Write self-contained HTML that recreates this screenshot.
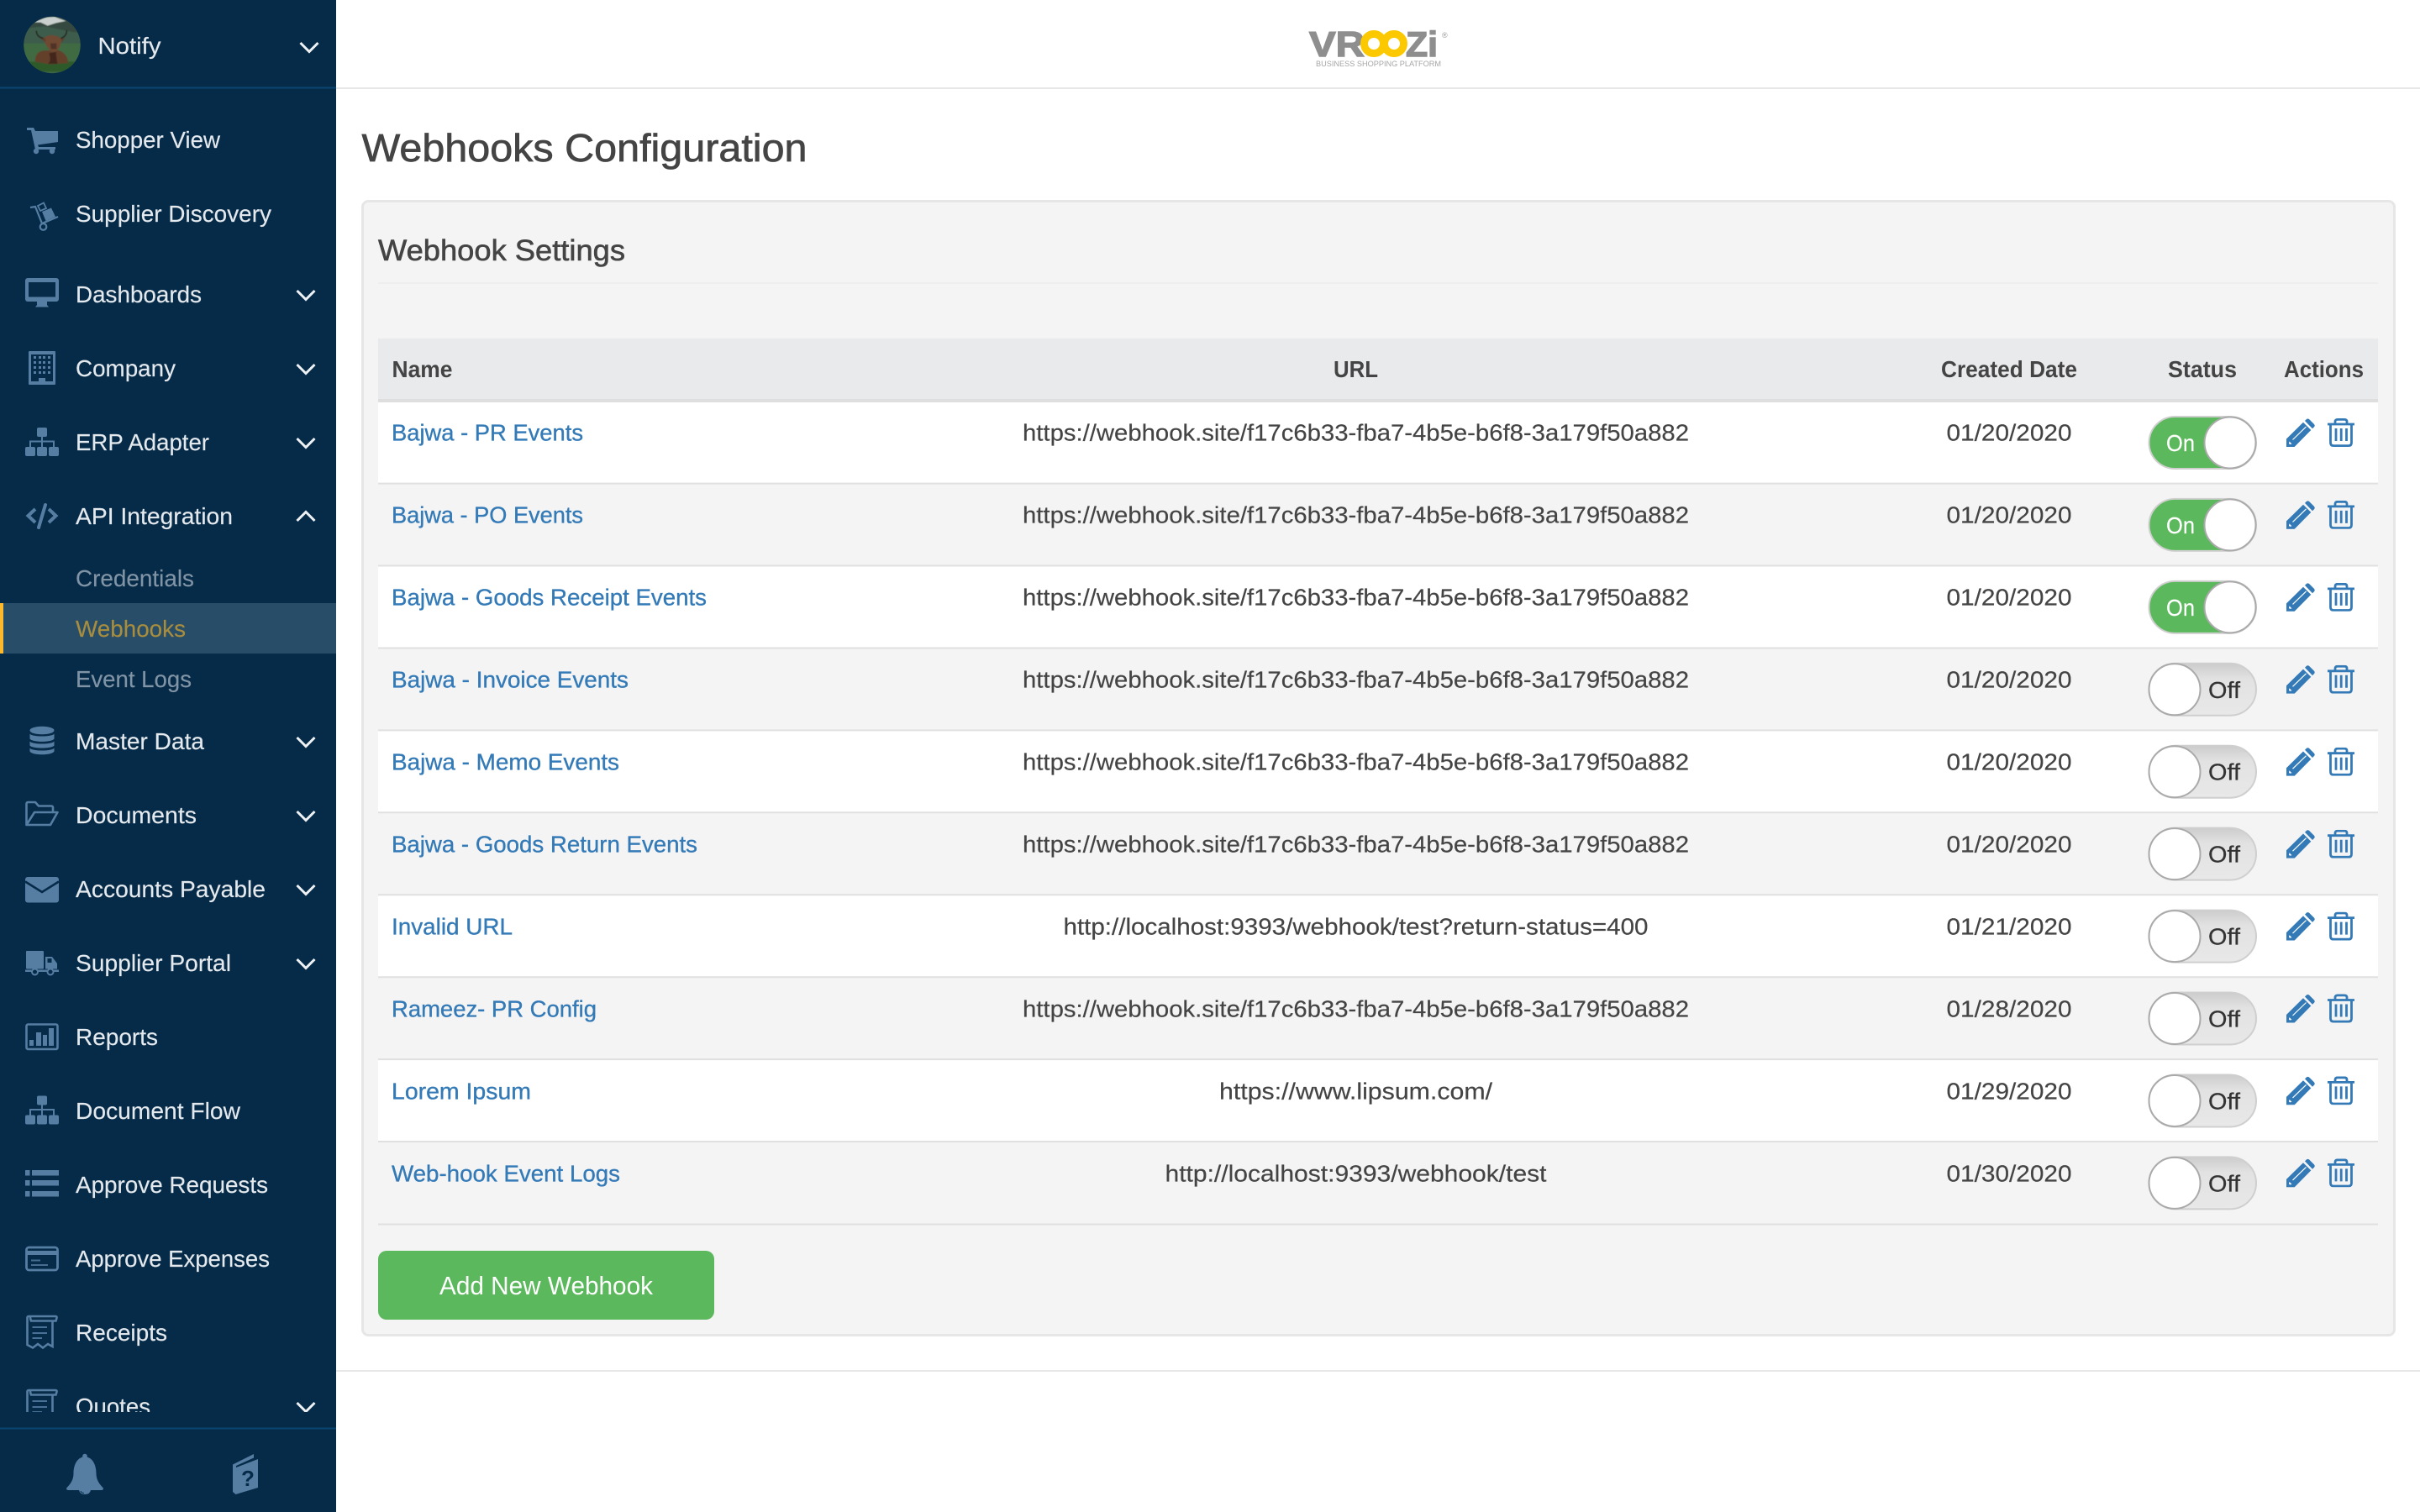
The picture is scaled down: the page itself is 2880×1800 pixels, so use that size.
<!DOCTYPE html>
<html lang="en">
<head>
<meta charset="utf-8">
<title>Webhooks Configuration</title>
<style>
html,body{margin:0;padding:0;background:#fff;width:2880px;height:1800px;overflow:hidden}
svg{display:block;font-family:"Liberation Sans",Arial,sans-serif}
.s{font-size:28px;fill:#e4e9ee;stroke:#e4e9ee;stroke-width:.15px}
.c{font-size:28px;fill:#8194a6;stroke:#8194a6;stroke-width:.15px}
.h{font-size:28px;fill:#444;font-weight:bold}
.n{font-size:28px;fill:#337ab7;stroke:#337ab7;stroke-width:.35px}
.t{font-size:28px;fill:#444;stroke:#444;stroke-width:.2px}
.on{font-size:28px;fill:#fff;stroke:#fff;stroke-width:.2px}
.off{font-size:28px;fill:#333;stroke:#333;stroke-width:.25px}
.i{fill:#567ea3}
.o{fill:none;stroke:#567ea3;stroke-width:2.6}
.ch{fill:none;stroke:#eef2f5;stroke-width:3}
</style>
</head>
<body>
<svg width="2880" height="1800" viewBox="0 0 2880 1800" xmlns="http://www.w3.org/2000/svg">
<defs>
<linearGradient id="offg" x1="0" y1="0" x2="0" y2="1">
<stop offset="0" stop-color="#cccccc"/><stop offset=".3" stop-color="#e2e2e2"/><stop offset="1" stop-color="#e8e8e8"/>
</linearGradient>
<clipPath id="av"><circle cx="62" cy="53.5" r="33.7"/></clipPath>
<clipPath id="menu"><rect x="0" y="106" width="400" height="1575"/></clipPath>
<filter id="bl"><feGaussianBlur stdDeviation="1.8"/></filter>
<symbol id="chd" viewBox="0 0 24 15" width="24" height="15"><path d="M1.5 2L12 12.5 22.5 2" fill="none" stroke="#eef2f5" stroke-width="3"/></symbol>
<symbol id="pencil" viewBox="0 0 34 34" width="34" height="34">
<path fill="#337ab7" d="M0 34V24.5L20 4.8 29.3 14 9.6 34Z"/>
<path fill="#337ab7" d="M22 3L24 1Q25.300 0 27 1L33 7Q34.400 8.700 33 10.300L31 12.300Z"/>
<path fill="none" stroke="#fff" stroke-width="1.2" d="M7.500 25.500L23.500 10"/>
<path fill="#fff" d="M3.500 27.500L6.500 30.500 4 31 3 30Z"/>
</symbol>
<symbol id="trash" viewBox="0 0 32 34" width="32" height="34">
<g fill="none" stroke="#337ab7" stroke-width="2.8">
<path d="M0 7H32"/>
<path d="M9 7V4Q9 1.400 12 1.400H20Q23 1.400 23 4V7"/>
<path d="M3.500 7V29Q3.500 32.600 7 32.600H25Q28.500 32.600 28.500 29V7"/>
<path d="M10 12V27M16.200 12V27M22.500 12V27"/>
</g>
</symbol>
<symbol id="sitemap" viewBox="0 0 40 34" width="40" height="34">
<rect x="14" y="0" width="12" height="11" rx="2" fill="#567ea3"/>
<rect x="0" y="23" width="12" height="11" rx="2" fill="#567ea3"/>
<rect x="14" y="23" width="12" height="11" rx="2" fill="#567ea3"/>
<rect x="28" y="23" width="12" height="11" rx="2" fill="#567ea3"/>
<path d="M20 11V23M6 23V16.500H34V23" fill="none" stroke="#567ea3" stroke-width="2"/>
</symbol>
<symbol id="acts" viewBox="0 0 81 34" width="81" height="34">
<use href="#pencil" x="0" y="0"/><use href="#trash" x="49" y="0"/>
</symbol>
</defs>

<!-- main background -->
<rect x="0" y="0" width="2880" height="1800" fill="#fff"/>
<rect x="400" y="104" width="2480" height="2" fill="#e7e7e7"/>
<rect x="400" y="1631" width="2480" height="2" fill="#e7e7e7"/>

<!-- logo -->
<text x="1558" y="67" font-size="42" font-weight="bold" fill="#8e8e8e" stroke="#8e8e8e" stroke-width="1.4" textLength="66" lengthAdjust="spacingAndGlyphs">VR</text>
<text x="1673" y="67" font-size="42" font-weight="bold" fill="#8e8e8e" stroke="#8e8e8e" stroke-width="1.4" textLength="38" lengthAdjust="spacingAndGlyphs">Zi</text>
<g fill="none" stroke="#fcc900" stroke-width="9"><circle cx="1635" cy="52" r="11.500"/><circle cx="1659" cy="52" r="11.500"/></g>
<text x="1716" y="45" font-size="9" fill="#999">®</text>
<text x="1566" y="79" font-size="9.500" fill="#a6a6a6" textLength="149" lengthAdjust="spacingAndGlyphs">BUSINESS SHOPPING PLATFORM</text>

<!-- title -->
<text x="430.500" y="192" font-size="46" fill="#444" stroke="#444" stroke-width=".7" textLength="530" lengthAdjust="spacingAndGlyphs">Webhooks Configuration</text>

<!-- panel -->
<rect x="431.500" y="239.500" width="2418" height="1350" rx="7" fill="#f4f4f4" stroke="#e6e6e6" stroke-width="3"/>
<text x="450" y="310" font-size="35" fill="#444" stroke="#444" stroke-width=".6" textLength="294" lengthAdjust="spacingAndGlyphs">Webhook Settings</text>
<rect x="450" y="336" width="2380" height="2" fill="#eeeeee"/>

<!-- table header -->
<rect x="450" y="403" width="2380" height="72" fill="#e9eaec"/>
<rect x="450" y="475" width="2380" height="4" fill="#dedede"/>
<text class="h" x="466.500" y="449" textLength="72" lengthAdjust="spacingAndGlyphs">Name</text>
<text class="h" x="1587" y="449" textLength="53" lengthAdjust="spacingAndGlyphs">URL</text>
<text class="h" x="2310" y="449" textLength="162" lengthAdjust="spacingAndGlyphs">Created Date</text>
<text class="h" x="2580" y="449" textLength="82" lengthAdjust="spacingAndGlyphs">Status</text>
<text class="h" x="2718" y="449" textLength="95" lengthAdjust="spacingAndGlyphs">Actions</text>

<!-- row backgrounds -->
<g fill="#fff">
<rect x="450" y="479" width="2380" height="96.600"/>
<rect x="450" y="673.500" width="2380" height="98"/>
<rect x="450" y="869.400" width="2380" height="98"/>
<rect x="450" y="1065.300" width="2380" height="98"/>
<rect x="450" y="1261.100" width="2380" height="98"/>
</g>
<g fill="none" stroke="#e0e0e0" stroke-width="2">
<path d="M450 575.600H2830M450 673.500H2830M450 771.500H2830M450 869.400H2830M450 967.300H2830M450 1065.300H2830M450 1163.200H2830M450 1261.100H2830M450 1359H2830M450 1457.500H2830"/>
</g>

<!-- names -->
<text class="n" x="466" y="524.500" textLength="228" lengthAdjust="spacingAndGlyphs">Bajwa - PR Events</text>
<text class="n" x="466" y="622.500" textLength="228" lengthAdjust="spacingAndGlyphs">Bajwa - PO Events</text>
<text class="n" x="466" y="720.500" textLength="375" lengthAdjust="spacingAndGlyphs">Bajwa - Goods Receipt Events</text>
<text class="n" x="466" y="818.500" textLength="282" lengthAdjust="spacingAndGlyphs">Bajwa - Invoice Events</text>
<text class="n" x="466" y="916.500" textLength="271" lengthAdjust="spacingAndGlyphs">Bajwa - Memo Events</text>
<text class="n" x="466" y="1014.500" textLength="364" lengthAdjust="spacingAndGlyphs">Bajwa - Goods Return Events</text>
<text class="n" x="466" y="1112.500" textLength="144" lengthAdjust="spacingAndGlyphs">Invalid URL</text>
<text class="n" x="466" y="1210.500" textLength="244" lengthAdjust="spacingAndGlyphs">Rameez- PR Config</text>
<text class="n" x="466" y="1308.500" textLength="166" lengthAdjust="spacingAndGlyphs">Lorem Ipsum</text>
<text class="n" x="466" y="1406.500" textLength="272" lengthAdjust="spacingAndGlyphs">Web-hook Event Logs</text>

<!-- urls -->
<text class="t" x="1217" y="524.500" textLength="793" lengthAdjust="spacingAndGlyphs">https://webhook.site/f17c6b33-fba7-4b5e-b6f8-3a179f50a882</text>
<text class="t" x="1217" y="622.500" textLength="793" lengthAdjust="spacingAndGlyphs">https://webhook.site/f17c6b33-fba7-4b5e-b6f8-3a179f50a882</text>
<text class="t" x="1217" y="720.500" textLength="793" lengthAdjust="spacingAndGlyphs">https://webhook.site/f17c6b33-fba7-4b5e-b6f8-3a179f50a882</text>
<text class="t" x="1217" y="818.500" textLength="793" lengthAdjust="spacingAndGlyphs">https://webhook.site/f17c6b33-fba7-4b5e-b6f8-3a179f50a882</text>
<text class="t" x="1217" y="916.500" textLength="793" lengthAdjust="spacingAndGlyphs">https://webhook.site/f17c6b33-fba7-4b5e-b6f8-3a179f50a882</text>
<text class="t" x="1217" y="1014.500" textLength="793" lengthAdjust="spacingAndGlyphs">https://webhook.site/f17c6b33-fba7-4b5e-b6f8-3a179f50a882</text>
<text class="t" x="1265.500" y="1112.500" textLength="696" lengthAdjust="spacingAndGlyphs">http://localhost:9393/webhook/test?return-status=400</text>
<text class="t" x="1217" y="1210.500" textLength="793" lengthAdjust="spacingAndGlyphs">https://webhook.site/f17c6b33-fba7-4b5e-b6f8-3a179f50a882</text>
<text class="t" x="1451" y="1308.500" textLength="325" lengthAdjust="spacingAndGlyphs">https://www.lipsum.com/</text>
<text class="t" x="1386.500" y="1406.500" textLength="454" lengthAdjust="spacingAndGlyphs">http://localhost:9393/webhook/test</text>

<!-- dates -->
<text class="t" x="2316.500" y="524.500" textLength="149" lengthAdjust="spacingAndGlyphs">01/20/2020</text>
<text class="t" x="2316.500" y="622.500" textLength="149" lengthAdjust="spacingAndGlyphs">01/20/2020</text>
<text class="t" x="2316.500" y="720.500" textLength="149" lengthAdjust="spacingAndGlyphs">01/20/2020</text>
<text class="t" x="2316.500" y="818.500" textLength="149" lengthAdjust="spacingAndGlyphs">01/20/2020</text>
<text class="t" x="2316.500" y="916.500" textLength="149" lengthAdjust="spacingAndGlyphs">01/20/2020</text>
<text class="t" x="2316.500" y="1014.500" textLength="149" lengthAdjust="spacingAndGlyphs">01/20/2020</text>
<text class="t" x="2316.500" y="1112.500" textLength="149" lengthAdjust="spacingAndGlyphs">01/21/2020</text>
<text class="t" x="2316.500" y="1210.500" textLength="149" lengthAdjust="spacingAndGlyphs">01/28/2020</text>
<text class="t" x="2316.500" y="1308.500" textLength="149" lengthAdjust="spacingAndGlyphs">01/29/2020</text>
<text class="t" x="2316.500" y="1406.500" textLength="149" lengthAdjust="spacingAndGlyphs">01/30/2020</text>

<!-- toggles on -->
<g>
<rect x="2557.500" y="496" width="127.500" height="62" rx="31" fill="#5cb85c" stroke="#cfcfcf" stroke-width="2"/>
<circle cx="2654" cy="527" r="30.500" fill="#fff" stroke="#aaa" stroke-width="2"/>
<text class="on" x="2578" y="537" textLength="34" lengthAdjust="spacingAndGlyphs">On</text>
</g>
<g transform="translate(0,97.930)">
<rect x="2557.500" y="496" width="127.500" height="62" rx="31" fill="#5cb85c" stroke="#cfcfcf" stroke-width="2"/>
<circle cx="2654" cy="527" r="30.500" fill="#fff" stroke="#aaa" stroke-width="2"/>
<text class="on" x="2578" y="537" textLength="34" lengthAdjust="spacingAndGlyphs">On</text>
</g>
<g transform="translate(0,195.860)">
<rect x="2557.500" y="496" width="127.500" height="62" rx="31" fill="#5cb85c" stroke="#cfcfcf" stroke-width="2"/>
<circle cx="2654" cy="527" r="30.500" fill="#fff" stroke="#aaa" stroke-width="2"/>
<text class="on" x="2578" y="537" textLength="34" lengthAdjust="spacingAndGlyphs">On</text>
</g>
<!-- toggles off -->
<g transform="translate(0,293.790)">
<rect x="2557.500" y="496" width="127.500" height="62" rx="31" fill="url(#offg)" stroke="#cfcfcf" stroke-width="2"/>
<circle cx="2588" cy="527" r="30.500" fill="#fff" stroke="#aaa" stroke-width="2"/>
<text class="off" x="2628" y="537" textLength="38" lengthAdjust="spacingAndGlyphs">Off</text>
</g>
<g transform="translate(0,391.720)">
<rect x="2557.500" y="496" width="127.500" height="62" rx="31" fill="url(#offg)" stroke="#cfcfcf" stroke-width="2"/>
<circle cx="2588" cy="527" r="30.500" fill="#fff" stroke="#aaa" stroke-width="2"/>
<text class="off" x="2628" y="537" textLength="38" lengthAdjust="spacingAndGlyphs">Off</text>
</g>
<g transform="translate(0,489.650)">
<rect x="2557.500" y="496" width="127.500" height="62" rx="31" fill="url(#offg)" stroke="#cfcfcf" stroke-width="2"/>
<circle cx="2588" cy="527" r="30.500" fill="#fff" stroke="#aaa" stroke-width="2"/>
<text class="off" x="2628" y="537" textLength="38" lengthAdjust="spacingAndGlyphs">Off</text>
</g>
<g transform="translate(0,587.580)">
<rect x="2557.500" y="496" width="127.500" height="62" rx="31" fill="url(#offg)" stroke="#cfcfcf" stroke-width="2"/>
<circle cx="2588" cy="527" r="30.500" fill="#fff" stroke="#aaa" stroke-width="2"/>
<text class="off" x="2628" y="537" textLength="38" lengthAdjust="spacingAndGlyphs">Off</text>
</g>
<g transform="translate(0,685.510)">
<rect x="2557.500" y="496" width="127.500" height="62" rx="31" fill="url(#offg)" stroke="#cfcfcf" stroke-width="2"/>
<circle cx="2588" cy="527" r="30.500" fill="#fff" stroke="#aaa" stroke-width="2"/>
<text class="off" x="2628" y="537" textLength="38" lengthAdjust="spacingAndGlyphs">Off</text>
</g>
<g transform="translate(0,783.440)">
<rect x="2557.500" y="496" width="127.500" height="62" rx="31" fill="url(#offg)" stroke="#cfcfcf" stroke-width="2"/>
<circle cx="2588" cy="527" r="30.500" fill="#fff" stroke="#aaa" stroke-width="2"/>
<text class="off" x="2628" y="537" textLength="38" lengthAdjust="spacingAndGlyphs">Off</text>
</g>
<g transform="translate(0,881.370)">
<rect x="2557.500" y="496" width="127.500" height="62" rx="31" fill="url(#offg)" stroke="#cfcfcf" stroke-width="2"/>
<circle cx="2588" cy="527" r="30.500" fill="#fff" stroke="#aaa" stroke-width="2"/>
<text class="off" x="2628" y="537" textLength="38" lengthAdjust="spacingAndGlyphs">Off</text>
</g>

<!-- actions -->
<use href="#acts" x="2721" y="498"/>
<use href="#acts" x="2721" y="595.900"/>
<use href="#acts" x="2721" y="693.900"/>
<use href="#acts" x="2721" y="791.800"/>
<use href="#acts" x="2721" y="889.700"/>
<use href="#acts" x="2721" y="987.700"/>
<use href="#acts" x="2721" y="1085.600"/>
<use href="#acts" x="2721" y="1183.500"/>
<use href="#acts" x="2721" y="1281.400"/>
<use href="#acts" x="2721" y="1379.400"/>

<!-- button -->
<rect x="450" y="1489" width="400" height="82" rx="10" fill="#5cb85c"/>
<text x="523" y="1541" font-size="31" fill="#fff" textLength="254" lengthAdjust="spacingAndGlyphs">Add New Webhook</text>

<!-- SIDEBAR -->
<rect x="0" y="0" width="400" height="1800" fill="#062b48"/>
<rect x="0" y="103.500" width="400" height="2" fill="#0b4470"/>
<rect x="0" y="1699.500" width="400" height="2" fill="#0b4470"/>

<!-- avatar -->
<g clip-path="url(#av)">
<rect x="28" y="19" width="68" height="70" fill="#3c6443"/>
<g transform="translate(20,10) scale(.3333)" filter="url(#bl)">
<rect x="10" y="15" width="230" height="70" fill="#36493f"/>
<path d="M60 50L105 32 135 30 175 45 140 52 110 62 85 50Z" fill="#c9d0cd"/>
<path d="M10 72L100 64 240 92V130H10Z" fill="#3e5b4b"/>
<path d="M10 125H240V225H10Z" fill="#3f6b42"/>
<path d="M10 190H240V225H10Z" fill="#2f5a2c"/>
<path d="M70 80Q70 104 100 108M178 78Q180 100 152 110" fill="none" stroke="#1d1712" stroke-width="4"/>
<path d="M65 190Q65 150 105 150L150 150Q180 160 184 195L120 200Z" fill="#64402c"/>
<path d="M96 105Q130 85 160 110 158 135 145 150 128 165 115 145 100 130 96 105Z" fill="#6f4a32"/>
<path d="M120 125H142V145H122Z" fill="#513326"/>
<path d="M85 110L100 104 104 120ZM160 108L172 105 160 122Z" fill="#5f3d2a"/>
<path d="M115 160Q125 190 110 198L145 198Q140 170 140 155Z" fill="#42281d"/>
</g>
</g>
<text class="s" x="116.500" y="64" textLength="75" lengthAdjust="spacingAndGlyphs">Notify</text>
<use href="#chd" x="356" y="49"/>

<g clip-path="url(#menu)">
<!-- highlight -->
<rect x="0" y="718" width="400" height="60" fill="#284d68"/>
<rect x="0" y="718" width="4" height="60" fill="#fdb92e"/>

<text class="s" x="90" y="176" textLength="172" lengthAdjust="spacingAndGlyphs">Shopper View</text>
<text class="s" x="90" y="264" textLength="233" lengthAdjust="spacingAndGlyphs">Supplier Discovery</text>
<text class="s" x="90" y="360" textLength="150" lengthAdjust="spacingAndGlyphs">Dashboards</text>
<text class="s" x="90" y="448" textLength="119" lengthAdjust="spacingAndGlyphs">Company</text>
<text class="s" x="90" y="536" textLength="159" lengthAdjust="spacingAndGlyphs">ERP Adapter</text>
<text class="s" x="90" y="624" textLength="187" lengthAdjust="spacingAndGlyphs">API Integration</text>
<text class="c" x="90" y="698" textLength="141" lengthAdjust="spacingAndGlyphs">Credentials</text>
<text x="90" y="758" font-size="28" fill="#a88d3e" stroke="#a88d3e" stroke-width=".15" textLength="131" lengthAdjust="spacingAndGlyphs">Webhooks</text>
<text class="c" x="90" y="818" textLength="138" lengthAdjust="spacingAndGlyphs">Event Logs</text>
<text class="s" x="90" y="892" textLength="153" lengthAdjust="spacingAndGlyphs">Master Data</text>
<text class="s" x="90" y="980" textLength="144" lengthAdjust="spacingAndGlyphs">Documents</text>
<text class="s" x="90" y="1068" textLength="226" lengthAdjust="spacingAndGlyphs">Accounts Payable</text>
<text class="s" x="90" y="1156" textLength="185" lengthAdjust="spacingAndGlyphs">Supplier Portal</text>
<text class="s" x="90" y="1244" textLength="98" lengthAdjust="spacingAndGlyphs">Reports</text>
<text class="s" x="90" y="1332" textLength="196" lengthAdjust="spacingAndGlyphs">Document Flow</text>
<text class="s" x="90" y="1420" textLength="229" lengthAdjust="spacingAndGlyphs">Approve Requests</text>
<text class="s" x="90" y="1508" textLength="231" lengthAdjust="spacingAndGlyphs">Approve Expenses</text>
<text class="s" x="90" y="1596" textLength="109" lengthAdjust="spacingAndGlyphs">Receipts</text>
<text class="s" x="90" y="1684" textLength="89" lengthAdjust="spacingAndGlyphs">Quotes</text>

<!-- chevrons -->
<use href="#chd" x="352" y="344"/>
<use href="#chd" x="352" y="432"/>
<use href="#chd" x="352" y="520"/>
<path class="ch" d="M353.500 620L364 609.500 374.500 620"/>
<use href="#chd" x="352" y="876"/>
<use href="#chd" x="352" y="964"/>
<use href="#chd" x="352" y="1052"/>
<use href="#chd" x="352" y="1140"/>
<use href="#chd" x="352" y="1668"/>

<!-- cart -->
<path class="i" d="M32 152H40L42 156H69V169L45 172.500L46 175H66V178H42L37 155H32Z"/>
<circle class="i" cx="43" cy="180" r="3.200"/><circle class="i" cx="62" cy="180" r="3.200"/>
<!-- dolly -->
<path class="o" style="stroke-width:2.200" d="M36 247L42 246 50 266 69 258"/>
<circle class="o" style="stroke-width:2.200" cx="51.500" cy="270" r="3.800"/>
<path class="o" style="stroke-width:1.800" d="M45 245L52 241.500 55 248 48 251Z"/>
<path class="i" d="M50 252L61 247.500 66 258 54.500 263Z"/>
<!-- monitor -->
<rect class="i" x="30" y="331" width="40" height="28" rx="3"/>
<rect x="34" y="336" width="32" height="17.500" fill="#062b48"/>
<path class="i" d="M44 358H56V363L58 365.500H42L44 363Z"/>
<!-- building -->
<rect class="i" x="34" y="418" width="32" height="40" rx="1"/>
<rect x="37" y="422" width="26" height="32" fill="#062b48"/>
<g class="i">
<rect x="40" y="424" width="3" height="3"/><rect x="46" y="424" width="3" height="3"/><rect x="51" y="424" width="3" height="3"/><rect x="57" y="424" width="3" height="3"/>
<rect x="40" y="430" width="3" height="3"/><rect x="46" y="430" width="3" height="3"/><rect x="51" y="430" width="3" height="3"/><rect x="57" y="430" width="3" height="3"/>
<rect x="40" y="436" width="3" height="3"/><rect x="46" y="436" width="3" height="3"/><rect x="51" y="436" width="3" height="3"/><rect x="57" y="436" width="3" height="3"/>
<rect x="40" y="442" width="3" height="3"/><rect x="46" y="442" width="3" height="3"/><rect x="51" y="442" width="3" height="3"/><rect x="57" y="442" width="3" height="3"/>
<rect x="46" y="450" width="8" height="8"/>
</g>
<!-- sitemap -->
<use href="#sitemap" x="30" y="509"/>
<!-- code -->
<g fill="none" stroke="#567ea3" stroke-width="4">
<path d="M42 606L33.500 614 42 622"/>
<path d="M58 606L66.500 614 58 622"/>
<path d="M54 601L46 628" stroke-linecap="round"/>
</g>
<!-- database -->
<ellipse class="i" cx="50" cy="869.500" rx="14.500" ry="4.800"/>
<path class="i" d="M35.500 873.500C38 877.500 62 877.500 64.500 873.500V879.500C62 884 38 884 35.500 879.500Z"/>
<path class="i" d="M35.500 882.500C38 886.500 62 886.500 64.500 882.500V887.500C62 891.500 38 891.500 35.500 887.500Z"/>
<path class="i" d="M35.500 890.500C38 894.500 62 894.500 64.500 890.500V894.500C62 899.500 38 899.500 35.500 894.500Z"/>
<!-- folder -->
<path class="o" d="M31.500 982V957Q31.500 955 33.500 955H42L46 959.500H61Q63 959.500 63 961.500V966.500M31.500 982L41 967H68.500L60 982Z" stroke-linejoin="round"/>
<!-- envelope -->
<rect class="i" x="30" y="1044" width="40" height="30.500" rx="3"/>
<path d="M30 1049.500L50 1062 70 1049.500" fill="none" stroke="#062b48" stroke-width="2.600"/>
<!-- truck -->
<rect class="i" x="31" y="1132" width="21" height="21.500" rx="1"/>
<path class="i" d="M54 1139H62L68 1147V1153.500H54Z"/>
<rect x="56.500" y="1141" width="5" height="5" fill="#062b48"/>
<rect class="i" x="30" y="1154.500" width="40" height="2.500"/>
<circle cx="41.500" cy="1157" r="3.500" fill="#062b48" stroke="#567ea3" stroke-width="2"/>
<circle cx="60" cy="1157" r="3.500" fill="#062b48" stroke="#567ea3" stroke-width="2"/>
<!-- reports -->
<rect class="o" x="31.500" y="1219.500" width="37" height="29.500" rx="2"/>
<rect class="i" x="35" y="1238" width="5" height="7"/>
<rect class="i" x="43" y="1229" width="6" height="16"/>
<rect class="i" x="51" y="1232" width="5" height="13"/>
<rect class="i" x="58" y="1224" width="6" height="21"/>
<!-- sitemap 2 -->
<use href="#sitemap" x="30" y="1304.500"/>
<!-- list -->
<g class="i">
<rect x="30" y="1393" width="5.500" height="6.500"/><rect x="38" y="1393" width="32" height="6.500"/>
<rect x="30" y="1405" width="5.500" height="6.500"/><rect x="38" y="1405" width="32" height="6.500"/>
<rect x="30" y="1418" width="5.500" height="6.500"/><rect x="38" y="1418" width="32" height="6.500"/>
</g>
<!-- card -->
<rect class="o" style="stroke-width:2.800" x="31.500" y="1485" width="37" height="27" rx="3"/>
<rect class="i" x="31" y="1489" width="38" height="5"/>
<rect class="i" opacity=".8" x="37" y="1499.500" width="11" height="2"/>
<rect class="i" opacity=".8" x="37" y="1505" width="20" height="2"/>
<!-- receipt -->
<path class="o" d="M32.500 1572V1568.500Q32.500 1567 34.500 1567H66Q68 1567 67.500 1569L66.500 1572.500H37Q36 1570 36 1568M62.500 1572.500V1603L57 1600 51 1604.500 45 1600 39 1604.500 32.500 1601V1572"/>
<path class="i" opacity=".85" d="M38.500 1579H56V1581H38.500ZM38.500 1586H56V1588H38.500ZM38.500 1592H50V1594H38.500Z"/>
<!-- quotes -->
<path class="o" d="M32.500 1690V1656.500Q32.500 1655 34.500 1655H66Q68 1655 67.500 1657L66.500 1660.500H37Q36 1658 36 1656M62.500 1660.500V1690"/>
<path class="i" opacity=".85" d="M38.500 1667H56V1669H38.500ZM38.500 1674H56V1676H38.500ZM38.500 1680H50V1682H38.500Z"/>
</g>

<!-- bottom icons -->
<circle class="i" cx="101" cy="1733.500" r="2.800"/>
<path class="i" d="M101 1734C91 1735 87.500 1745 87.500 1754C87.500 1762 83.500 1767 79.500 1771Q78 1773.500 81 1774H121Q124 1773.500 122.500 1771C118.500 1767 114.500 1762 114.500 1754C114.500 1745 111 1735 101 1734Z"/>
<path d="M94 1774Q95 1779 101 1779Q107 1779 108 1774Z" fill="#567ea3"/>
<path d="M96 1775Q97 1777.500 100 1777.500" fill="none" stroke="#062b48" stroke-width="1"/>
<path class="i" d="M277 1743.500L302 1731V1735.500L281 1745V1747L307 1737V1771L280.500 1779 277 1776Z"/>
<text x="287" y="1769" font-size="26" font-weight="bold" fill="#062b48">?</text>
</svg>
</body>
</html>
